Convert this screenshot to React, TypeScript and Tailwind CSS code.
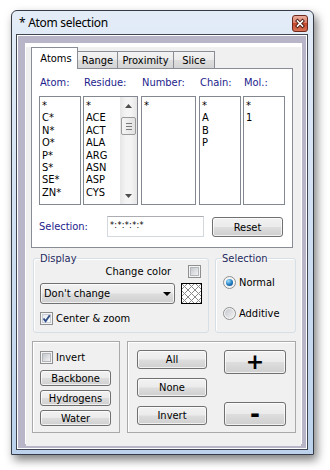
import React from 'react';

const FONT = "font-['DejaVu_Sans_Condensed','Liberation_Sans',sans-serif]";

function CloseButton() {
  return (
    <svg width="16" height="17" viewBox="0 0 16 17" className="mt-[4px]">
      <defs>
        <linearGradient id="cbg" x1="0" y1="0" x2="0" y2="1">
          <stop offset="0" stopColor="#eab0a2" />
          <stop offset="0.45" stopColor="#d9806a" />
          <stop offset="0.5" stopColor="#c5482c" />
          <stop offset="1" stopColor="#d97558" />
        </linearGradient>
      </defs>
      <rect x="0.5" y="0.5" width="15" height="16" rx="2.5" fill="url(#cbg)" stroke="#6d2b1f" />
      <path d="M5.5 6 L10.5 11 M10.5 6 L5.5 11" stroke="#4a1c14" strokeWidth="3.4" strokeLinecap="square" />
      <path d="M5.5 6 L10.5 11 M10.5 6 L5.5 11" stroke="#ffffff" strokeWidth="1.6" strokeLinecap="square" />
    </svg>
  );
}

function Button({ children, className = '' }: { children: React.ReactNode; className?: string }) {
  return (
    <div
      className={`flex items-center justify-center rounded-[3px] border border-[#707070] bg-[linear-gradient(to_bottom,#f2f2f2_0%,#ebebeb_48%,#dddddd_52%,#cfcfcf_100%)] shadow-[inset_0_0_0_1px_rgba(255,255,255,0.7)] ${className}`}
    >
      {children}
    </div>
  );
}

function CheckBox({ checked = false }: { checked?: boolean }) {
  return (
    <div className="flex h-[13px] w-[13px] shrink-0 items-center justify-center border border-[#8e8f8f] bg-[#f4f4f4]">
      <div
        className={`relative h-[9px] w-[9px] border ${
          checked
            ? 'border-[#c9ced6] bg-[linear-gradient(135deg,#e6e9ee,#ffffff)]'
            : 'border-[#b3b6bb] bg-[linear-gradient(135deg,#c4c8ce,#f2f2f2)]'
        }`}
      >
        {checked && (
          <svg width="11" height="11" viewBox="0 0 11 11" className="absolute -left-[2px] -top-[2px]">
            <path d="M2.5 5.5 L4.6 8.2 L8.8 2.2" stroke="#2f4f86" strokeWidth="1.9" fill="none" />
          </svg>
        )}
      </div>
    </div>
  );
}

function Radio({ checked = false }: { checked?: boolean }) {
  return (
    <div className="flex h-[13px] w-[13px] shrink-0 items-center justify-center rounded-full border border-[#8e8f8f] bg-[#f4f4f4]">
      {checked ? (
        <div className="h-[7px] w-[7px] rounded-full bg-[radial-gradient(circle_at_35%_30%,#9fe0ff,#1f7bc0_55%,#0b3d70)]" />
      ) : (
        <div className="h-[9px] w-[9px] rounded-full bg-[linear-gradient(135deg,#c4c8ce,#f2f2f2)]" />
      )}
    </div>
  );
}

function Tab({ label, active = false, w }: { label: string; active?: boolean; w: string }) {
  if (active) {
    return (
      <div className={`relative z-10 -mb-px flex h-[22px] items-center justify-center border border-b-0 border-[#898c95] bg-white pl-[3px] pb-[1px] ${w}`}>
        {label}
      </div>
    );
  }
  return (
    <div
      className={`-ml-px flex h-[17px] items-center justify-center border border-b-0 border-[#898c95] bg-[linear-gradient(to_bottom,#f3f3f3,#ebebeb_50%,#dedede_50%,#d4d4d4)] ${w}`}
    >
      {label}
    </div>
  );
}

function ScrollBar() {
  return (
    <div className="flex w-[17px] flex-col bg-[linear-gradient(to_right,#e6e6e6,#f4f4f4_35%,#f4f4f4_65%,#e6e6e6)]">
      <div className="flex h-[17px] items-center justify-center">
        <svg width="7" height="4" viewBox="0 0 7 4">
          <path d="M0 4 L3.5 0 L7 4 Z" fill="#4d4d4d" />
        </svg>
      </div>
      <div className="mx-[1px] mt-[3px] flex h-[18px] flex-col items-center justify-center gap-[2px] rounded-[2px] border border-[#9a9a9a] bg-[linear-gradient(to_right,#f5f5f5,#e2e2e2)]">
        <div className="h-px w-[6px] bg-[#7a7a7a]" />
        <div className="h-px w-[6px] bg-[#7a7a7a]" />
        <div className="h-px w-[6px] bg-[#7a7a7a]" />
      </div>
      <div className="flex-1" />
      <div className="flex h-[17px] items-center justify-center">
        <svg width="7" height="4" viewBox="0 0 7 4">
          <path d="M0 0 L7 0 L3.5 4 Z" fill="#4d4d4d" />
        </svg>
      </div>
    </div>
  );
}

function ListColumn({ label, items, w, ml = '', scroll = false }: { label: string; items: string[]; w: string; ml?: string; scroll?: boolean }) {
  return (
    <div className={`flex flex-col ${w} ${ml}`}>
      <div className="h-[13px] pl-[1px] text-[#1c1c8c]">{label}</div>
      <div className="mt-[7px] flex h-[109px] border border-[#828790] bg-white">
        <div className="flex-1 pl-[2px] pt-[3px] leading-[12.4px]">
          {items.map((it) => (
            <div key={it}>{it}</div>
          ))}
        </div>
        {scroll && <ScrollBar />}
      </div>
    </div>
  );
}

function Swatch() {
  const lines = [];
  for (let k = -21; k <= 21; k += 7) {
    lines.push(<line key={`a${k}`} x1={k} y1={0} x2={k + 21} y2={21} stroke="#8a8a8a" strokeWidth="1" />);
    lines.push(<line key={`b${k}`} x1={k} y1={21} x2={k + 21} y2={0} stroke="#8a8a8a" strokeWidth="1" />);
  }
  return (
    <svg width="21" height="21" viewBox="0 0 21 21">
      <rect x="0" y="0" width="21" height="21" fill="#ffffff" />
      {lines}
      <rect x="0.5" y="0.5" width="20" height="20" fill="none" stroke="#000000" />
    </svg>
  );
}

export default function App() {
  return (
    <div className={`${FONT} h-[470px] w-[330px] overflow-hidden bg-white pl-[11px] pt-[10px] text-[11px] leading-[13px] text-black`}>
      <div className="flex h-[445px] w-[303px] flex-col rounded-t-[6px] border border-[#363c47] bg-[linear-gradient(to_bottom,#e3ecf7,#bcd2ec)] shadow-[3px_5px_10px_rgba(0,0,0,0.5)]">
        {/* title bar */}
        <div className="flex h-[23px] shrink-0 items-start justify-between pl-[7px] pr-[5px]">
          <span className="mt-[4px] font-['Noto_Sans',sans-serif] text-[12px] leading-[15px] tracking-[-0.3px]">* Atom selection</span>
          <CloseButton />
        </div>

        {/* client area */}
        <div className="ml-[4px] mr-[5px] h-[416px] border border-[#3f4650] bg-white p-px">
          <div className="h-full border-solid border-[#b9b5c8] border-l-[7px] border-t-[7px] border-r-[4px] border-b-[4px] bg-white p-px">
            <div className="h-full bg-[#f0f0f0]">
              {/* tabs */}
              <div className="ml-[5px] mt-[3px] w-[262px]">
                <div className="flex h-[21px] items-end">
                  <Tab label="Atoms" active w="w-[47px]" />
                  <Tab label="Range" w="w-[41px]" />
                  <Tab label="Proximity" w="w-[57px]" />
                  <Tab label="Slice" w="w-[42px]" />
                </div>
                <div className="h-[180px] border border-[#898c95] bg-white pl-[7px] pt-[7px]">
                  <div className="flex">
                    <ListColumn label="Atom:" w="w-[42px]" items={['*', 'C*', 'N*', 'O*', 'P*', 'S*', 'SE*', 'ZN*']} />
                    <ListColumn label="Residue:" w="w-[55px]" ml="ml-[2px]" scroll items={['*', 'ACE', 'ACT', 'ALA', 'ARG', 'ASN', 'ASP', 'CYS']} />
                    <ListColumn label="Number:" w="w-[55px]" ml="ml-[3px]" items={['*']} />
                    <ListColumn label="Chain:" w="w-[42px]" ml="ml-[3px]" items={['*', 'A', 'B', 'P']} />
                    <ListColumn label="Mol.:" w="w-[42px]" ml="ml-[2px]" items={['*', '1']} />
                  </div>
                  <div className="mt-[11px] flex h-[21px] items-start">
                    <div className="flex h-[21px] w-[68px] items-center text-[#1c1c8c]">Selection:</div>
                    <div className="h-[21px] w-[97px] border border-[#d3d7de] border-t-[#abadb3] bg-white pl-[2px] pt-[3px] text-[9px] leading-[10px] tracking-[0.3px]">
                      *:*:*:*:*
                    </div>
                    <Button className="ml-[8px] mt-px h-[20px] w-[71px]">Reset</Button>
                  </div>
                </div>
              </div>

              {/* display / selection groups */}
              <div className="ml-[7px] mt-[4px] flex items-start">
                <fieldset className="w-[176px] rounded-[3px] border border-[#d5dfe5] px-[6px] pb-[7px] shadow-[inset_1px_1px_0_#fff]">
                  <legend className="leading-[13px] text-[#1e2a5e]">Display</legend>
                  <div className="flex h-[13px] items-center justify-end">
                    <span>Change color</span>
                    <div className="ml-[17px] mr-px">
                      <CheckBox />
                    </div>
                  </div>
                  <div className="mt-[5px] flex items-center">
                    <Button className="h-[21px] w-[135px] !justify-between pl-[3px] pr-[3px]">
                      <span>Don&apos;t change</span>
                      <svg width="8" height="4" viewBox="0 0 8 4">
                        <path d="M0 0 L8 0 L4 4 Z" fill="#000000" />
                      </svg>
                    </Button>
                    <div className="ml-[6px]">
                      <Swatch />
                    </div>
                  </div>
                  <div className="mt-[8px] flex h-[13px] items-center">
                    <CheckBox checked />
                    <span className="ml-[3px]">Center &amp; zoom</span>
                  </div>
                </fieldset>

                <fieldset className="ml-[6px] h-[81px] w-[81px] rounded-[3px] border border-[#d5dfe5] px-[6px] shadow-[inset_1px_1px_0_#fff]">
                  <legend className="leading-[13px] text-[#1e2a5e]">Selection</legend>
                  <div className="ml-px mt-[11px] flex h-[13px] items-center">
                    <Radio checked />
                    <span className="ml-[3px]">Normal</span>
                  </div>
                  <div className="ml-px mt-[18px] flex h-[13px] items-center">
                    <Radio />
                    <span className="ml-[3px]">Additive</span>
                  </div>
                </fieldset>
              </div>

              {/* bottom groups */}
              <div className="ml-[6px] mt-[8px] flex">
                <div className="h-[92px] w-[88px] border border-[#a9a9a9] pl-[7px] pt-[9px] shadow-[inset_1px_1px_0_#fff]">
                  <div className="flex h-[13px] items-center">
                    <CheckBox />
                    <span className="ml-[3px]">Invert</span>
                  </div>
                  <Button className="mt-[6px] h-[16px] w-[71px]">Backbone</Button>
                  <Button className="mt-[4px] h-[16px] w-[71px]">Hydrogens</Button>
                  <Button className="mt-[4px] h-[16px] w-[71px]">Water</Button>
                </div>
                <div className="ml-[7px] flex h-[92px] w-[169px] border border-[#a9a9a9] pl-[9px] pt-[8px] shadow-[inset_1px_1px_0_#fff]">
                  <div className="flex flex-col">
                    <Button className="h-[19px] w-[70px]">All</Button>
                    <Button className="mt-[9px] h-[19px] w-[70px]">None</Button>
                    <Button className="mt-[9px] h-[19px] w-[70px]">Invert</Button>
                  </div>
                  <div className="ml-[17px] flex flex-col">
                    <Button className="h-[24px] w-[62px] font-['DejaVu_Sans',sans-serif] text-[22px] font-bold leading-[22px]">+</Button>
                    <Button className="mt-[28px] h-[24px] w-[62px] font-['DejaVu_Sans',sans-serif] text-[24px] font-bold leading-[22px]">-</Button>
                  </div>
                </div>
              </div>
            </div>
          </div>
        </div>
      </div>
    </div>
  );
}
